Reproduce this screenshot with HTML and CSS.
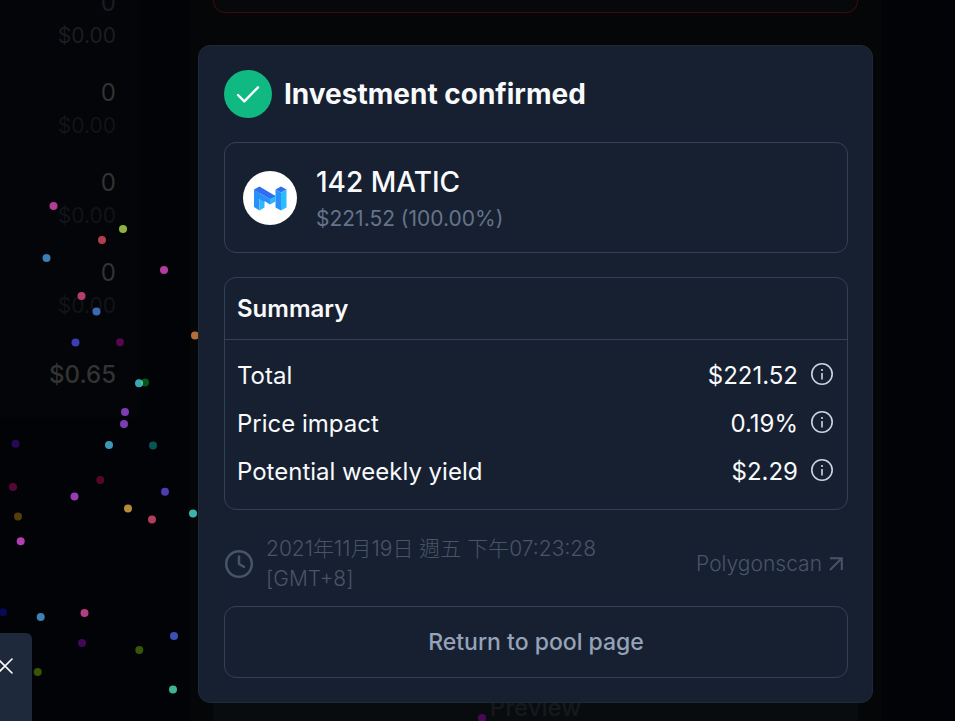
FILE: index.html
```html
<!DOCTYPE html>
<html lang="en">
<head>
<meta charset="utf-8">
<meta name="viewport" content="width=device-width, initial-scale=1">
<title>Investment confirmed</title>
<link rel="stylesheet" href="styles.css">
</head>
<body>
<div class="page">
  <aside class="balances">
    <ul class="balance-list">
      <li class="muted"><span class="amount">0</span><span class="fiat bright">$0.00</span></li>
      <li><span class="amount">0</span><span class="fiat">$0.00</span></li>
      <li><span class="amount">0</span><span class="fiat">$0.00</span></li>
      <li><span class="amount">0</span><span class="fiat">$0.00</span></li>
    </ul>
    <p class="balance-total">$0.65</p>
  </aside>
  <main class="invest">
    <div class="alert"></div>
    <button class="preview" type="button">Preview</button>
  </main>
</div>

<svg class="confetti" aria-hidden="true">
  <circle cx="53.500" cy="206" r="4" fill="#b43c96"/>
  <circle cx="123" cy="229" r="4" fill="#8cb43c"/>
  <circle cx="102" cy="240" r="4" fill="#b43c50"/>
  <circle cx="46.500" cy="258" r="4" fill="#3c7db4"/>
  <circle cx="164" cy="270" r="4" fill="#b43ca0"/>
  <circle cx="81.500" cy="296" r="4" fill="#b43c6e"/>
  <circle cx="96.500" cy="311.500" r="4" fill="#3c69b4"/>
  <circle cx="195" cy="335.500" r="4" fill="#b46e3c"/>
  <circle cx="75.500" cy="342.500" r="4" fill="#3c3cb4"/>
  <circle cx="120" cy="342.300" r="4" fill="#55084b"/>
  <circle cx="145" cy="382.500" r="4" fill="#08551c"/>
  <circle cx="139" cy="383.300" r="4" fill="#3ca5b4"/>
  <path d="M141.500 380q3 3 0 6q-1-3 0-6" fill="#3cd28c"/>
  <circle cx="125" cy="412" r="4" fill="#7d3cb4"/>
  <circle cx="124" cy="424" r="4" fill="#7d3cb4"/>
  <circle cx="15.500" cy="443.700" r="4" fill="#260855"/>
  <circle cx="109" cy="445" r="4" fill="#3c96b4"/>
  <circle cx="153" cy="445.500" r="4" fill="#085555"/>
  <circle cx="100.300" cy="480" r="4" fill="#550825"/>
  <circle cx="13" cy="487" r="4" fill="#550835"/>
  <circle cx="165" cy="491.700" r="4" fill="#4b3cb4"/>
  <circle cx="74.500" cy="496.500" r="4" fill="#963cb4"/>
  <circle cx="128" cy="508.500" r="4" fill="#b48c3c"/>
  <circle cx="193" cy="513.500" r="4" fill="#3cb4aa"/>
  <circle cx="18" cy="516.500" r="4" fill="#553c08"/>
  <circle cx="152" cy="519.500" r="4" fill="#b43c5f"/>
  <circle cx="20.700" cy="541.300" r="4" fill="#b43cb4"/>
  <circle cx="3" cy="612.300" r="4" fill="#080855"/>
  <circle cx="84.500" cy="613" r="4" fill="#b43c82"/>
  <circle cx="40.700" cy="617" r="4" fill="#3c82b4"/>
  <circle cx="174" cy="636" r="4" fill="#3c50b4"/>
  <circle cx="82" cy="643" r="4" fill="#400855"/>
  <circle cx="139.300" cy="650" r="4" fill="#375508"/>
  <circle cx="37.700" cy="672" r="4" fill="#375508"/>
  <circle cx="173" cy="689.500" r="4" fill="#3cb496"/>
  <circle cx="482" cy="718" r="4" fill="#4b0855"/>
</svg>

<div class="overlay">
  <section class="modal" role="dialog" aria-labelledby="modal-title">
    <header class="modal-header">
      <span class="status">
        <svg width="24" height="24" viewBox="0 0 24 24" fill="none" stroke="#fff" stroke-width="2.400" stroke-linecap="round" stroke-linejoin="round"><path d="M2 13l6.300 6.300L22 5.300"/></svg>
      </span>
      <h1 id="modal-title">Investment confirmed</h1>
    </header>

    <div class="card asset">
      <span class="token">
        <svg width="34" height="28" viewBox="0 0 34 28">
          <path fill="#2891fb" d="M1 6l5.500 3v17.500L1 23z"/>
          <path fill="#2bb8fb" d="M6.500 26.500V14l5 2.500v7zM17 20.500V14l5.500-3v6.500z"/>
          <path fill="#2891fb" d="M1 6l16 9v5.500L11.500 17v1L6.500 15z"/>
          <path fill="#2f6df2" d="M1 5.500L6.500 2.500 22.500 12 17 15 1 6z"/>
          <path fill="#2f6df2" d="M22.500 5.500L28 2.500l5.500 3L28 8.500z"/>
          <path fill="#2891fb" d="M22.500 5.500l5.500 3v18l-5.500-3z"/>
          <path fill="#2bbdfb" d="M33.500 5.500l-5.500 3v18l5.500-3z"/>
        </svg>
      </span>
      <div class="asset-text">
        <p class="asset-amount">142 MATIC</p>
        <p class="asset-fiat">$221.52 (100.00%)</p>
      </div>
    </div>

    <div class="card">
      <h2 class="summary-title">Summary</h2>
      <dl class="summary">
        <div class="row"><dt>Total</dt><dd>$221.52
          <svg class="info" viewBox="0 0 24 24"><circle cx="12" cy="12" r="10.200"/><path d="M12 11v6.500M12 7v2"/></svg></dd></div>
        <div class="row"><dt>Price impact</dt><dd>0.19%
          <svg class="info" viewBox="0 0 24 24"><circle cx="12" cy="12" r="10.200"/><path d="M12 11v6.500M12 7v2"/></svg></dd></div>
        <div class="row"><dt>Potential weekly yield</dt><dd>$2.29
          <svg class="info" viewBox="0 0 24 24"><circle cx="12" cy="12" r="10.200"/><path d="M12 11v6.500M12 7v2"/></svg></dd></div>
      </dl>
    </div>

    <div class="receipt">
      <div class="time">
        <svg width="30" height="30" viewBox="0 0 30 30" fill="none" stroke="currentColor" stroke-width="2.500" stroke-linecap="round" stroke-linejoin="round"><circle cx="15" cy="15" r="12.800"/><path d="M15 7.500V15l5 2.800"/></svg>
        <time datetime="2021-11-19T19:23:28+08:00">2021年11月19日 週五 下午07:23:28 [GMT+8]</time>
      </div>
      <a class="explorer" href="#">Polygonscan
        <svg width="14" height="14" viewBox="0 0 14 14" fill="none" stroke="currentColor" stroke-width="2"><path d="M1 1.200h11.800V13M12.500 1.500L1 13"/></svg>
      </a>
    </div>

    <button class="return" type="button">Return to pool page</button>
  </section>
</div>

<button class="toast-close" type="button" aria-label="Close">
  <svg width="16" height="16" viewBox="0 0 16 16" fill="none" stroke="#fff" stroke-width="1.600" stroke-linecap="round"><path d="M1 1l14 14M15 1L1 15"/></svg>
</button>
</body>
</html>
```
FILE: styles.css
```css
* {
  box-sizing: border-box;
  margin: 0;
  padding: 0;
}

body {
  height: 100vh;
  overflow: hidden;
  background: #020307;
  color: #f8fafc;
  font: 24px/36px Inter, "Noto Sans CJK TC", sans-serif;
}

button {
  font: inherit;
  border: 0;
}

.page {
  display: grid;
  grid-template-columns: 140px 1fr;
  column-gap: 50px;
  height: 100vh;
  overflow: hidden;
  padding-right: 74px;
}

.balances {
  height: 417px;
  padding-right: 24px;
  overflow: hidden;
  background: #030508;
  color: #333;
  text-align: right;
}

.balance-list {
  display: grid;
  gap: 24px;
  margin-top: -15px;
  list-style: none;
}

.balance-list span {
  display: block;
}

.balance-list .fiat {
  color: #121417;
  font-size: 21px;
  line-height: 30px;
}

.balance-list .bright,
.balance-list .muted {
  color: #1b1e21;
}

.balance-total {
  margin-top: 36px;
  font-weight: 500;
}

.invest {
  display: flex;
  flex-direction: column;
  justify-content: space-between;
  padding: 0 23px;
  background: #040608;
}

.alert {
  height: 13px;
  border: 1px solid #3a0d0d;
  border-top: 0;
  border-radius: 0 0 12px 12px;
  background: #06080a;
}

.preview {
  flex: none;
  height: 72px;
  margin-bottom: -23px;
  background: #090c0f;
  color: #16191c;
  font-weight: 500;
}

.confetti {
  position: absolute;
  inset: 0;
  width: 100%;
  height: 100%;
}

.overlay {
  position: absolute;
  inset: 0;
  padding: 45px 82px 0 198px;
}

.modal {
  display: grid;
  gap: 24px;
  padding: 24px 24px 24px 25px;
  border: 1px solid #1e293b;
  border-radius: 12px;
  background: #172030;
}

.modal-header {
  display: flex;
  align-items: center;
  gap: 12px;
}

.status,
.token {
  display: flex;
  flex: none;
  align-items: center;
  justify-content: center;
  border-radius: 50%;
}

.status {
  width: 48px;
  height: 48px;
  background: #10b981;
}

h1 {
  font-size: 28px;
  font-weight: 700;
}

.card {
  border: 1px solid #334155;
  border-radius: 12px;
}

.asset {
  display: flex;
  align-items: center;
  gap: 19px;
  padding: 18px 18px 17px;
}

.token {
  width: 54px;
  height: 54px;
  background: #fff;
}

.asset-amount {
  font-size: 28px;
  font-weight: 500;
  line-height: 42px;
}

.asset-fiat {
  color: #64748b;
  font-size: 21px;
  line-height: 32px;
}

.summary-title {
  padding: 13px 12px 12px;
  border-bottom: 1px solid #334155;
  font-size: 24px;
  font-weight: 600;
}

.summary {
  display: grid;
  gap: 12px;
  padding: 18px 13px 19px 12px;
}

.row,
.row dd {
  display: flex;
  align-items: center;
  justify-content: space-between;
}

.row dd {
  gap: 12px;
}

.info {
  width: 24px;
  height: 24px;
  margin-bottom: 4px;
  fill: none;
  stroke: #cbd5e1;
  stroke-width: 1.6;
}

.receipt,
.time,
.explorer {
  display: flex;
  align-items: center;
}

.receipt {
  justify-content: space-between;
  margin-bottom: -12px;
  color: #475569;
  font-size: 21px;
  font-weight: 300;
  line-height: 30px;
}

.time {
  gap: 12px;
}

.time time {
  max-width: 360px;
}

.explorer {
  gap: 7px;
  padding-right: 5px;
  color: inherit;
  text-decoration: none;
}

.return {
  height: 72px;
  border: 1px solid #334155;
  border-radius: 12px;
  background: transparent;
  color: #94a3b8;
  font-size: 23px;
  font-weight: 500;
}

.toast-close {
  position: absolute;
  bottom: 0;
  left: 0;
  display: flex;
  width: 32px;
  height: 88px;
  padding: 25px 0 0;
  border-radius: 0 6px 0 0;
  background: #1e293b;
}

.toast-close svg {
  flex: none;
  margin-left: -3px;
}
```
